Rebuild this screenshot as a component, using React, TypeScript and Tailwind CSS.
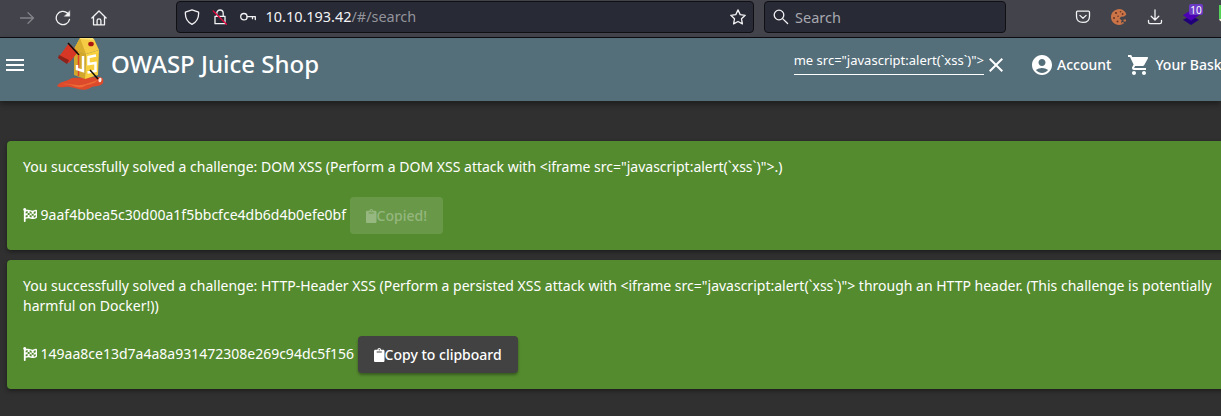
import React from 'react';
import { FaClipboard, FaFlagCheckered } from 'react-icons/fa';
import { MdAccountCircle, MdClose, MdMenu, MdShoppingCart } from 'react-icons/md';

const line = {
  fill: 'none',
  stroke: 'currentColor',
  strokeWidth: 1.3,
  strokeLinecap: 'round' as const,
  strokeLinejoin: 'round' as const,
};

function Icon({ children, className = '' }: { children: React.ReactNode; className?: string }) {
  return (
    <svg viewBox="0 0 16 16" className={`size-4 shrink-0 ${className}`} {...line}>
      {children}
    </svg>
  );
}

function Toolbar() {
  return (
    <div className="flex h-[38px] items-start overflow-hidden border-b border-[#0e0e12] bg-[#42434b] text-[#f3f3f5]">
      <div className="flex h-[35px] w-[176px] shrink-0 items-center gap-5 pl-[19px]">
        <Icon className="text-[#83848a]">
          <path d="M1.5 8h13M9 2.8 14.5 8 9 13.2" />
        </Icon>
        <Icon>
          <path d="M14.5 9.3A6.7 6.7 0 1 1 12.4 3L14 4.6" />
          <path d="M14.8 1v5.3H9.5z" fill="currentColor" strokeWidth=".4" />
        </Icon>
        <Icon>
          <path d="M.9 8 8 1l7.1 7M2.5 6.8v8h11v-8M6.1 14.5v-4q0-1.7 1.9-1.7t1.9 1.7v4" />
        </Icon>
      </div>
      <div className="mt-px flex h-8 w-[578px] shrink-0 items-center rounded border border-[#101014] bg-[#282a36] pr-[7px] pl-[7px]">
        <Icon>
          <path d="M8 .8 14.6 3.2C15 9 12.5 13 8 15.3 3.5 13 1 9 1.4 3.2z" />
        </Icon>
        <Icon className="ml-3">
          <path d="M4.8 6.7V4.2a3.2 3.2 0 0 1 6.4 0v2.5M3 7.3h10v7.4H3z" />
          <path d="M1.2 2 14.5 15.2" stroke="#e5093f" />
        </Icon>
        <Icon className="ml-3">
          <circle cx="3.9" cy="7.7" r="3.2" />
          <path d="M7.1 7.7h8.2v2.8M12.5 7.7v2" />
        </Icon>
        <div className="ml-[9.5px] flex-1 text-[14.45px] leading-5">
          10.10.193.42<span className="text-[#93949b]">/#/search</span>
        </div>
        <Icon>
          <path d="m8 .9 2.2 4.7 5 .7-3.7 3.5.9 5.1L8 12.5l-4.4 2.4.9-5.1L.8 6.3l5-.7z" />
        </Icon>
      </div>
      <div className="mt-px ml-[10px] flex h-8 w-[242px] shrink-0 items-center rounded border border-[#101014] bg-[#282a36] pl-2">
        <Icon>
          <circle cx="6" cy="6" r="4.8" />
          <path d="m9.6 9.6 5 4.9" />
        </Icon>
        <span className="ml-[6px] text-[14.5px] leading-5 text-[#a7a8af]">Search</span>
      </div>
      <div className="flex h-[34px] shrink-0 items-center pl-[69px]">
        <Icon>
          <path d="M1.5 3.2q0-1 1-1h11q1 0 1 1v4q0 6.2-6.5 6.2T1.5 7.2zM4.9 6.4 8 9.3l3.1-2.9" />
        </Icon>
        <svg viewBox="0 0 16 16" className="ml-5 size-4">
          <path
            d="M8.5 0C3.5 0 0 3.8 0 8s3.3 8 8 8c1.2 0 2.5-.3 3.4-.8L10 13l.8-1.6L8.5 9.6 10 7.8l3-.3 2.3-1.8C15 3.5 13 .5 8.5 0z"
            fill="#cb7447"
          />
          <g fill="#673522">
            <circle cx="5" cy="4" r="1.1" />
            <circle cx="9.5" cy="2.8" r=".8" />
            <circle cx="11.6" cy="5" r=".9" />
            <circle cx="3" cy="9" r="1" />
            <circle cx="7" cy="7.2" r=".8" />
            <circle cx="6.5" cy="12.5" r="1" />
          </g>
          <path d="M12.5 10.5H15v2h-2.5zM11 13.3h1.7v1.4H11z" fill="#cb7447" />
        </svg>
        <Icon className="ml-5">
          <path d="M8 1v9.7M4.2 7.2 8 11l3.8-3.8M1.5 11.5V13q0 1.7 1.7 1.7h9.6q1.7 0 1.7-1.7v-1.5" />
        </Icon>
        <div className="relative ml-5 size-4 shrink-0">
          <svg viewBox="0 0 16 16" className="size-4">
            <path d="m0 10.8 8-4 8 4L8 16z" fill="#200078" />
            <path d="M0 6.2 8 1l8 5.2-8 5.5z" fill="#4b00b5" />
          </svg>
          <span className="absolute -top-[5px] left-[6px] flex h-[11px] w-[14px] items-center justify-center rounded-[2px] bg-[#6c3bc4] text-[10px] leading-none text-white">
            10
          </span>
        </div>
        <svg viewBox="0 0 16 16" className="-mt-px ml-5 size-4 shrink-0 overflow-visible">
          <path d="M0-4h16v14H0z" fill="#55d158" />
          <path d="M0 10h16v5L1 12z" fill="#eee6d8" />
        </svg>
      </div>
    </div>
  );
}

function JuiceLogo() {
  return (
    <svg viewBox="0 0 60 60" className="h-[60px] w-[60px] shrink-0">
      <path d="M7 53c3-5 9-4 15-8l27-1c4 0 5 3 4 6-2 4-8 2-13 5-6 4-14 0-20-1-5-1-8 2-13-1z" fill="#dc4a2b" />
      <path d="M12 51c9-1 14 3 24 0l12-4c-4 5-11 4-15 7-7 2-10-3-21-3z" fill="#ee6a37" />
      <path d="m24 16 12 5-1 25-11-4z" fill="#d2a72c" />
      <path d="m36 21 13-4-1 25-13 4z" fill="#f8cf3c" />
      <path d="m30 5 14 1 5 11-13 4-12-5z" fill="#f5cc43" />
      <path d="m30 5 6 16-12-5z" fill="#d9ad2e" />
      <path d="m30 4 13 1 1 2-14-1z" fill="#ffe477" />
      <ellipse cx="41" cy="11" rx="2.8" ry="2.3" fill="#a91612" />
      <path d="m19 10 9 9-9 11-11-5z" fill="#d73725" />
      <path d="m9 22 10 5-2 4-9-6z" fill="#8e2118" />
      <path d="m18 10 11 12" fill="none" stroke="#100d0b" strokeWidth="1.6" />
      <path d="M28.5 22v21" fill="none" stroke="#df4429" strokeWidth="1.5" />
      <path d="M33 23v15l-6-2v-4" fill="none" stroke="#fff" strokeWidth="2.5" />
      <path d="M46 22.5 38.5 24v7l7-1v8l-8 1.5" fill="none" stroke="#fff" strokeWidth="2.5" />
      <path d="m40 37 8 9" fill="none" stroke="#100d0b" strokeWidth="1.5" />
      <ellipse cx="50" cy="47" rx="1.5" ry="2.3" fill="#ffe8df" transform="rotate(15 50 47)" />
    </svg>
  );
}

function Header() {
  return (
    <header className="relative z-10 flex h-[63px] items-start overflow-hidden bg-[#546e7a] text-white shadow-[0_3px_6px_rgba(0,0,0,.4)]">
      <div className="flex h-[54px] w-[794px] shrink-0 items-center pl-[3px]">
        <MdMenu className="size-6 shrink-0" />
        <div className="ml-[23px] -mt-[4px]">
          <JuiceLogo />
        </div>
        <h1 className="-mt-[2px] ml-px text-[24px] leading-8 font-medium whitespace-nowrap">OWASP Juice Shop</h1>
      </div>
      <div className="mt-[9px] flex h-[28px] w-[190px] shrink-0 justify-end overflow-hidden border-b border-white text-[13px] leading-[27px] whitespace-nowrap">
        me src="javascript:alert(`xss`)"&gt;
      </div>
      <div className="flex h-[54px] shrink-0 items-center text-sm font-medium whitespace-nowrap">
        <MdClose className="size-6 shrink-0" />
        <MdAccountCircle className="ml-[22px] size-6 shrink-0" />
        <span className="ml-[3px]">Account</span>
        <MdShoppingCart className="ml-[16px] size-6 shrink-0" />
        <span className="ml-[4px]">Your Basket</span>
      </div>
    </header>
  );
}

function Challenge({ text, code, copied }: { text: string; code: string; copied?: boolean }) {
  return (
    <section className="w-[1222px] rounded bg-[#558b2f] p-4 text-sm leading-5 text-white shadow-[0_2px_4px_rgba(0,0,0,.4)]">
      <p>{text}</p>
      <div className="mt-5 flex h-[37px] items-center">
        <FaFlagCheckered className="-mt-[2px] size-[14px] shrink-0" />
        <span className="-mt-[2px] ml-[3.6px]">{code}</span>
        {copied ? (
          <button className="ml-1 flex h-[37px] items-center rounded bg-white/12 px-4 font-medium text-white/30">
            <FaClipboard className="h-[14px] w-[10.5px]" />
            Copied!
          </button>
        ) : (
          <button className="ml-1 flex h-[37px] items-center rounded bg-[#424242] px-4 font-medium text-white shadow-[0_2px_3px_rgba(0,0,0,.35)]">
            <FaClipboard className="h-[14px] w-[10.5px]" />
            Copy to clipboard
          </button>
        )}
      </div>
    </section>
  );
}

export default function App() {
  return (
    <div className="h-[416px] w-[1221px] overflow-hidden bg-[#303030] font-['Noto_Sans',sans-serif]">
      <Toolbar />
      <Header />
      <main className="flex flex-col gap-[10px] pt-10 pl-[7px]">
        <Challenge
          text={'You successfully solved a challenge: DOM XSS (Perform a DOM XSS attack with <iframe src="javascript:alert(`xss`)">.)'}
          code="9aaf4bbea5c30d00a1f5bbcfce4db6d4b0efe0bf"
          copied
        />
        <Challenge
          text={'You successfully solved a challenge: HTTP-Header XSS (Perform a persisted XSS attack with <iframe src="javascript:alert(`xss`)"> through an HTTP header. (This challenge is potentially harmful on Docker!))'}
          code="149aa8ce13d7a4a8a931472308e269c94dc5f156"
        />
      </main>
    </div>
  );
}
